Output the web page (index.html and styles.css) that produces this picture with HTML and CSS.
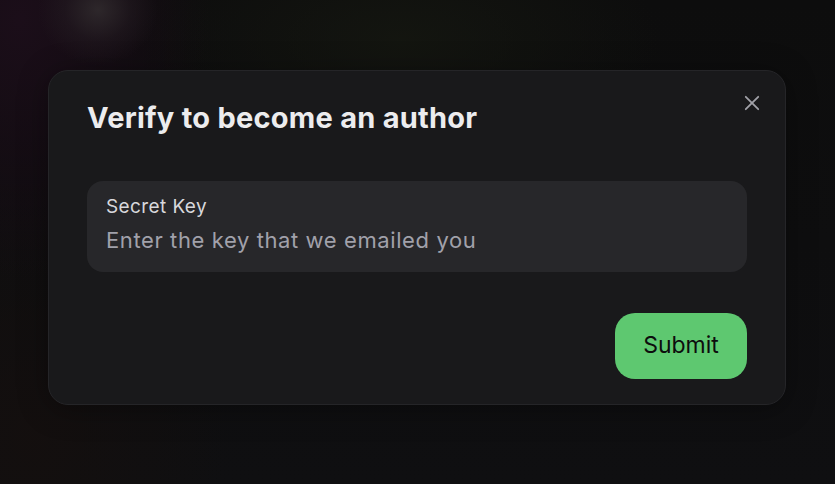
FILE: index.html
```html
<!DOCTYPE html>
<html lang="en">
<head>
<meta charset="utf-8">
<title>Verify</title>
<link rel="stylesheet" href="styles.css">
</head>
<body>
<div class="backdrop">
  <section class="modal" role="dialog" aria-labelledby="mt">
    <button class="close" aria-label="Close">
      <svg width="18" height="18" viewBox="0 0 18 18" fill="none" stroke="currentColor" stroke-width="2" stroke-linecap="round"><path d="M2 2L16 16M16 2L2 16"/></svg>
    </button>
    <h2 id="mt" class="title">Verify to become an author</h2>
    <label class="field">
      <span class="field-label">Secret Key</span>
      <input class="field-input" type="text" placeholder="Enter the key that we emailed you">
    </label>
    <div class="actions">
      <button class="submit">Submit</button>
    </div>
  </section>
</div>
</body>
</html>
```
FILE: styles.css
```css
* { box-sizing: border-box; }
html, body { margin: 0; height: 100%; }
body {
  font-family: Inter, "Noto Sans", sans-serif;
  background:
    radial-gradient(ellipse 60px 55px at 98px 10px, rgba(48,42,45,0.9) 0, rgba(40,32,38,0.4) 55%, rgba(0,0,0,0) 100%),
    radial-gradient(ellipse 190px 260px at 20px 20px, rgba(28,14,26,0.95) 0, rgba(24,12,22,0.6) 55%, rgba(0,0,0,0) 100%),
    radial-gradient(ellipse 260px 120px at 400px 40px, rgba(20,22,16,0.9), rgba(0,0,0,0) 100%),
    radial-gradient(ellipse 200px 260px at 30px 440px, rgba(20,15,14,0.9), rgba(0,0,0,0) 100%),
    linear-gradient(180deg, #0d0d0d 0%, #0f0f11 100%);
  overflow: hidden;
}
.backdrop {
  display: flex;
  justify-content: flex-start;
  padding: 70px 0 0 48px;
  height: 100%;
}
.modal {
  position: relative;
  width: 738px;
  height: 335px;
  flex: none;
  background: #19191b;
  border: 1px solid #252528;
  border-radius: 20px;
  padding: 29px 38px 0 38px;
  display: flex;
  flex-direction: column;
  box-shadow: 0 4px 30px rgba(0,0,0,0.35);
}
.close {
  position: absolute;
  top: 22px;
  right: 23px;
  width: 20px;
  height: 20px;
  padding: 0;
  margin: 0;
  border: 0;
  background: transparent;
  color: #a1a1a8;
  display: flex;
  align-items: center;
  justify-content: center;
  cursor: pointer;
}
.close svg { width: 16px; height: 16px; }
.title {
  margin: 0;
  font-size: 29px;
  line-height: 36px;
  font-weight: 700;
  color: #ececee;
  letter-spacing: 0.25px;
}
.field {
  margin-top: 45px;
  height: 91px;
  background: #27272a;
  border-radius: 16px;
  padding: 14px 19px 0 19px;
  display: flex;
  flex-direction: column;
}
.field-label {
  font-size: 19px;
  line-height: 24px;
  color: #d8d8dc;
  letter-spacing: 0.4px;
}
.field-input {
  margin-top: 7px;
  border: 0;
  outline: 0;
  background: transparent;
  padding: 0;
  font-family: inherit;
  font-size: 22px;
  line-height: 28px;
  letter-spacing: 0.6px;
  color: #ececee;
}
.field-input::placeholder { color: #a1a1aa; opacity: 1; }
.actions {
  margin-top: 41px;
  display: flex;
  justify-content: flex-end;
}
.submit {
  width: 132px;
  height: 66px;
  border: 0;
  border-radius: 20px;
  background: #5ec870;
  color: #0d0d0d;
  font-family: inherit;
  font-size: 23px;
  font-weight: 400;
  padding: 0 0 2px 0;
  cursor: pointer;
}
```
